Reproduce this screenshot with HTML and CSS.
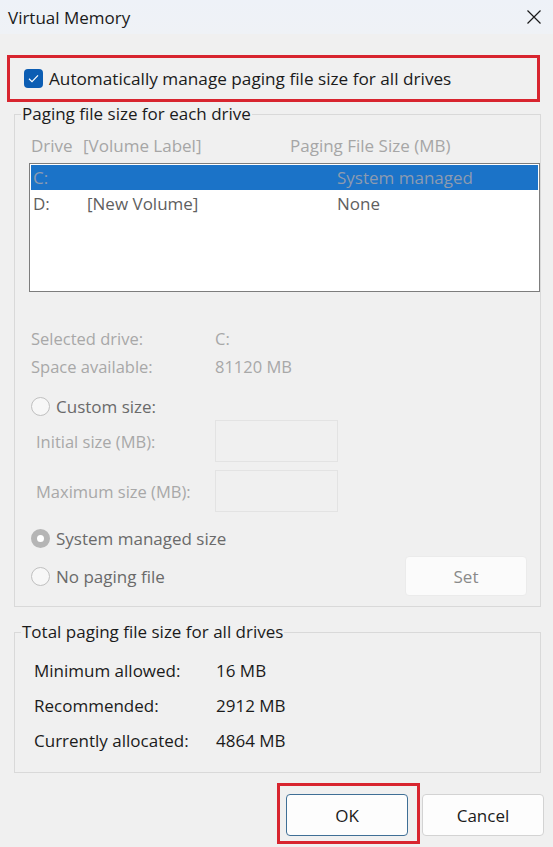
FILE: index.html
```html
<!DOCTYPE html>
<html>
<head>
<meta charset="utf-8">
<link rel="stylesheet" href="styles.css">
</head>
<body>
<div class="dialog">
  <div class="titlebar">
    <span class="title">Virtual Memory</span>
    <svg class="close" width="14" height="14" viewBox="0 0 14 14"><path d="M0.5 0.5 L13.5 13.5 M13.5 0.5 L0.5 13.5" stroke="#1a1a1a" stroke-width="1.2" fill="none"/></svg>
  </div>

  <div class="auto-box">
    <span class="checkbox"><svg width="19" height="19" viewBox="0 0 19 19"><path d="M5 9.8 L8 12.6 L14 6.4" stroke="#ffffff" stroke-width="1.2" fill="none"/></svg></span>
    <span class="auto-label">Automatically manage paging file size for all drives</span>
  </div>

  <fieldset class="group group-drives">
    <legend>Paging file size for each drive</legend>
    <div class="list-header">
      <span class="col-drive">Drive</span>
      <span class="col-label">[Volume Label]</span>
      <span class="col-size">Paging File Size (MB)</span>
    </div>
    <div class="listbox">
      <div class="row selected">
        <span class="col-drive">C:</span>
        <span class="col-label"></span>
        <span class="col-size">System managed</span>
      </div>
      <div class="row">
        <span class="col-drive">D:</span>
        <span class="col-label">[New Volume]</span>
        <span class="col-size">None</span>
      </div>
    </div>

    <div class="info">
      <div class="info-row"><span class="info-key">Selected drive:</span><span>C:</span></div>
      <div class="info-row"><span class="info-key">Space available:</span><span>81120 MB</span></div>
    </div>

    <div class="radio-row radio-custom"><span class="radio"></span><span class="radio-text">Custom size:</span></div>
    <div class="field-row field-initial"><span class="field-label">Initial size (MB):</span><span class="field-input"></span></div>
    <div class="field-row field-max"><span class="field-label">Maximum size (MB):</span><span class="field-input"></span></div>
    <div class="radio-row radio-system"><span class="radio checked"></span><span class="radio-text">System managed size</span></div>
    <div class="radio-row radio-none">
      <span class="radio"></span><span class="radio-text">No paging file</span>
      <span class="set-btn">Set</span>
    </div>
  </fieldset>

  <fieldset class="group group-total">
    <legend>Total paging file size for all drives</legend>
    <div class="total-row"><span class="total-key">Minimum allowed:</span><span>16 MB</span></div>
    <div class="total-row"><span class="total-key">Recommended:</span><span>2912 MB</span></div>
    <div class="total-row"><span class="total-key">Currently allocated:</span><span>4864 MB</span></div>
  </fieldset>

  <div class="buttons">
    <div class="ok-highlight"><span class="btn btn-ok">OK</span></div>
    <span class="btn btn-cancel">Cancel</span>
  </div>
</div>
</body>
</html>
```

FILE: styles.css
```css
html, body {
  margin: 0;
  padding: 0;
}
body {
  background: #f0f0f0;
  font-family: "Open Sans", "Noto Sans", sans-serif;
  color: #1b1b1b;
  width: 553px;
  height: 847px;
  overflow: hidden;
}
.dialog {
  width: 553px;
  height: 847px;
  display: flex;
  flex-direction: column;
}
.titlebar {
  height: 34px;
  padding: 0 12px 0 8px;
  display: flex;
  align-items: center;
  justify-content: space-between;
  background: linear-gradient(#eef2f8, #eff2f6);
}
.title {
  font-size: 17px;
  color: #1a1a1a;
}
.close {
  display: block;
}

.auto-box {
  margin: 21px 13px 0 7px;
  height: 41px;
  border: 3px solid #d8252f;
  display: flex;
  align-items: center;
  padding-left: 14px;
  gap: 6px;
}
.checkbox {
  width: 19px;
  height: 19px;
  border-radius: 4px;
  background: #0c5db3;
  display: block;
}
.checkbox svg { display: block; }
.auto-label {
  font-size: 17.2px;
  color: #1b1b1b;
}

.group {
  margin: 0 12px 0 14px;
  padding: 0;
  border: 1px solid #d9d9d9;
  min-width: 0;
}
.group legend {
  font-size: 17px;
  line-height: 20px;
  padding: 0 1px;
  margin-left: 6px;
  color: #1b1b1b;
}
.group-drives {
  margin-top: 2px;
  padding-bottom: 10px;
}

.list-header {
  margin-top: 12px;
  height: 20px;
  line-height: 20px;
  display: flex;
  padding-left: 16px;
  font-size: 17px;
  color: #a6a6a6;
}
.list-header .col-drive { width: 52px; }
.list-header .col-label { width: 207px; }

.listbox {
  margin: 7px 0 0 14px;
  height: 127px;
  border: 1px solid #7d7d7d;
  background: #ffffff;
  font-size: 17px;
}
.row {
  display: flex;
  padding-left: 3px;
  height: 28px;
  line-height: 28px;
  color: #5f5f5f;
}
.row.selected {
  margin: 1px 1px 0 1px;
  height: 25px;
  line-height: 25px;
  padding-left: 2px;
  background: #1b73c8;
  color: #8d9bb0;
}
.row .col-drive { width: 54px; }
.row .col-label { width: 250px; }

.info {
  margin-top: 33px;
  font-size: 16.5px;
  color: #a8a8a8;
}
.info-row {
  display: flex;
  height: 28px;
  line-height: 28px;
  padding-left: 16px;
}
.info-key { width: 184px; }

.radio-row {
  display: flex;
  align-items: center;
  padding-left: 16px;
  font-size: 17px;
  color: #6a6a6a;
}
.radio {
  width: 17px;
  height: 17px;
  border: 1px solid #c0c0c0;
  border-radius: 50%;
  background: #f7f7f7;
  box-sizing: content-box;
  margin-right: 6px;
  flex: none;
}
.radio.checked {
  width: 7px;
  height: 7px;
  border: 6px solid #b5b5b5;
  background: #ffffff;
}
.radio-custom {
  margin-top: 11px;
  height: 28px;
}
.field-row {
  display: flex;
  align-items: center;
  height: 42px;
  padding-left: 21px;
  font-size: 16.5px;
  color: #a8a8a8;
}
.field-label { width: 179px; }
.field-input {
  width: 121px;
  height: 40px;
  border: 1px solid #e3e3e3;
  background: #f0f0f0;
}
.field-max { margin-top: 8px; }
.radio-system {
  margin-top: 12px;
  height: 28px;
}
.radio-none {
  margin-top: 4px;
  height: 40px;
  padding-right: 13px;
}
.set-btn {
  margin-left: auto;
  width: 120px;
  height: 38px;
  border: 1px solid #ebebeb;
  border-radius: 4px;
  background: #fbfbfb;
  display: flex;
  align-items: center;
  justify-content: center;
  color: #8a8a8a;
  font-size: 17px;
}

.group-total {
  margin-top: 15px;
  padding-top: 11px;
  padding-bottom: 14px;
}
.total-row {
  display: flex;
  height: 35px;
  line-height: 35px;
  padding-left: 19px;
  font-size: 17px;
  color: #1b1b1b;
}
.total-key { width: 182px; }

.buttons {
  margin-top: 10px;
  display: flex;
  justify-content: flex-end;
  align-items: flex-start;
  padding-right: 9px;
  gap: 2px;
}
.ok-highlight {
  border: 3px solid #d8252f;
  padding: 8px 9px 5px 6px;
}
.btn {
  width: 120px;
  height: 40px;
  border: 1px solid #d3d3d3;
  border-radius: 4px;
  background: #fdfdfd;
  display: flex;
  align-items: center;
  justify-content: center;
  font-size: 17px;
  color: #1b1b1b;
}
.btn-ok {
  border-color: #3f6f96;
}
.btn-cancel {
  margin-top: 11px;
}
```
